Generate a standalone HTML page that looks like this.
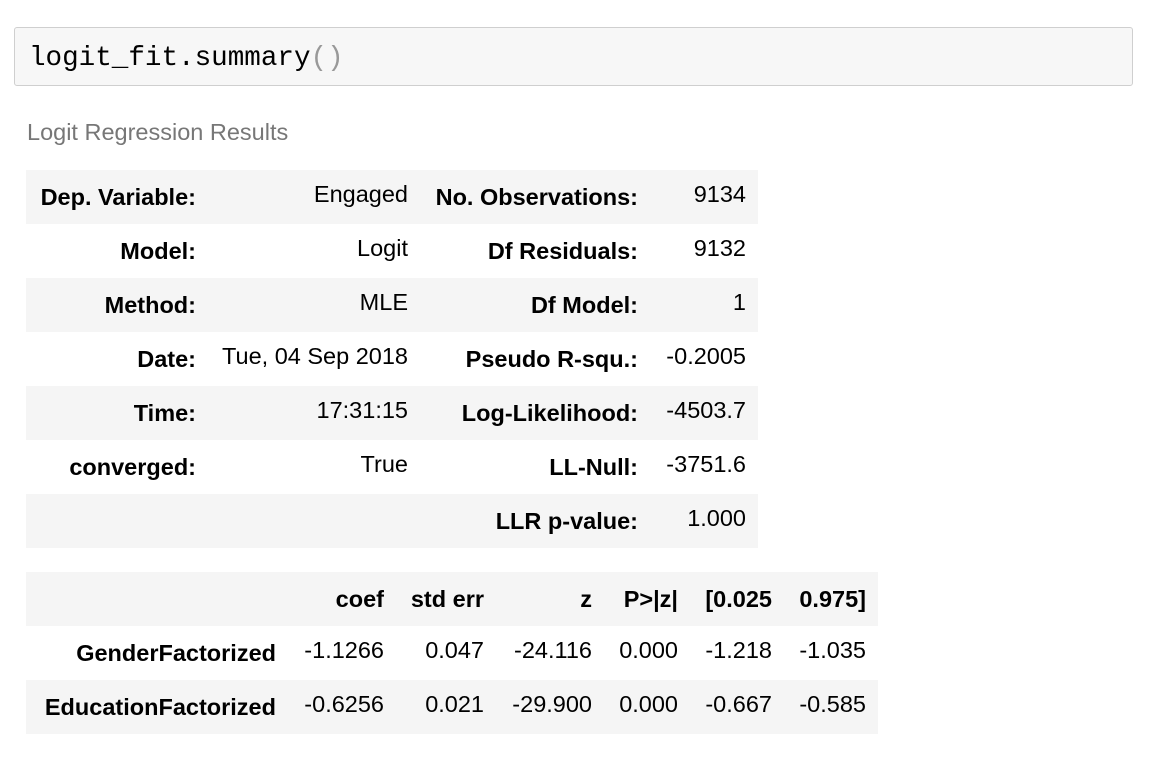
<!DOCTYPE html>
<html><head><meta charset="utf-8"><style>
body{margin:0;width:1152px;height:766px;background:#fff;position:relative;font-family:"Liberation Sans",Arial,sans-serif;overflow:hidden}
.code{position:absolute;left:14px;top:27px;width:1117px;height:57px;background:#f7f7f7;border:1px solid #cfcfcf;border-radius:3px}
.code span{position:absolute;left:14px;top:15px;font-family:"Liberation Mono",monospace;font-size:27.6px;color:#000;line-height:32px}
.cap{position:absolute;left:27px;top:119px;font-size:23.5px;color:#777}
.row{position:absolute;left:26px;height:54px}
.g{background:#f5f5f5}
.t{position:absolute;font-size:23.5px;color:#000;white-space:nowrap;text-align:right}
.b{font-weight:bold}
</style></head><body>
<div class="code"><span>logit_fit.summary<span style="position:static;color:#999">()</span></span></div>
<div class="cap">Logit Regression Results</div>

<div class="row g" style="top:170px;width:732px"></div>
<div class="row g" style="top:278px;width:732px"></div>
<div class="row g" style="top:386px;width:732px"></div>
<div class="row g" style="top:494px;width:732px"></div>
<div class="row g" style="top:572px;width:852px"></div>
<div class="row g" style="top:680px;width:852px"></div>

<div id="t1"></div>
<script>
var rows=[["Dep. Variable:","Engaged","No. Observations:","9134"],["Model:","Logit","Df Residuals:","9132"],["Method:","MLE","Df Model:","1"],["Date:","Tue, 04 Sep 2018","Pseudo R-squ.:","-0.2005"],["Time:","17:31:15","Log-Likelihood:","-4503.7"],["converged:","True","LL-Null:","-3751.6"],["","","LLR p-value:","1.000"]];
var h="";
rows.forEach(function(r,i){var y=170+54*i;
h+='<div class="t b" style="right:'+(1152-196)+'px;top:'+(y+14)+'px">'+r[0]+'</div>';
h+='<div class="t" style="right:'+(1152-408)+'px;top:'+(y+11)+'px">'+r[1]+'</div>';
h+='<div class="t b" style="right:'+(1152-638)+'px;top:'+(y+14)+'px">'+r[2]+'</div>';
h+='<div class="t" style="right:'+(1152-746)+'px;top:'+(y+11)+'px">'+r[3]+'</div>';});
var ends=[276,384,484,592,678,772,866];
var t2=[["","coef","std err","z","P>|z|","[0.025","0.975]"],["GenderFactorized","-1.1266","0.047","-24.116","0.000","-1.218","-1.035"],["EducationFactorized","-0.6256","0.021","-29.900","0.000","-0.667","-0.585"]];
t2.forEach(function(r,i){var y=572+54*i;r.forEach(function(c,j){var b=(i==0||j==0);
h+='<div class="t'+(b?' b':'')+'" style="right:'+(1152-ends[j])+'px;top:'+(y+(b?14:11))+'px">'+c.replace('>','&gt;')+'</div>';});});
document.getElementById("t1").innerHTML=h;
</script>
</body></html>
